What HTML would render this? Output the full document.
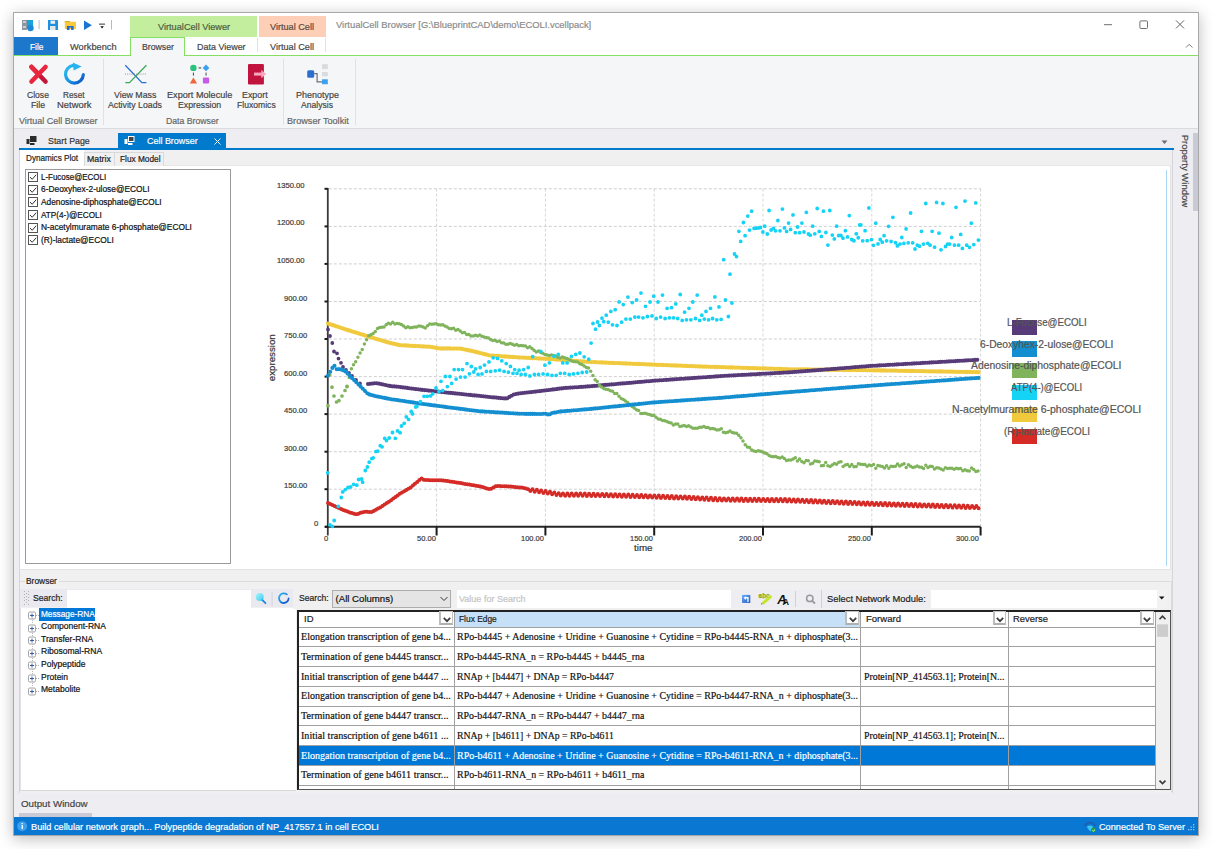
<!DOCTYPE html>
<html><head><meta charset="utf-8"><style>
html,body{margin:0;padding:0;width:1213px;height:849px;overflow:hidden;background:#fff;}
.a{position:absolute;}
.t{position:absolute;white-space:pre;line-height:1;transform-origin:0 50%;-webkit-text-stroke:0.2px currentColor;}
</style></head><body>
<div class="a" style="left:13px;top:12px;width:1186px;height:824px;background:#fff;border:1px solid #a8a8a8;box-sizing:border-box;box-shadow:0 3px 14px rgba(0,0,0,0.26);"></div>
<svg class="a" style="left:20px;top:18px" width="100" height="16" viewBox="0 0 100 16">
<rect x="2" y="2" width="5" height="10" fill="#8e96a0"/><rect x="3" y="3" width="3" height="2" fill="#c8ccd2"/><rect x="3" y="8" width="3" height="2" fill="#c8ccd2"/>
<rect x="7" y="2" width="6" height="9" fill="#1aa3d9"/><circle cx="10.5" cy="10" r="3.2" fill="#1e88d8"/>
<rect x="18.6" y="2" width="1" height="9" fill="#b9b9b9"/>
<path d="M28 2h9.5l0.5 0.5v9.5h-10z" fill="#1d90e0"/><rect x="30.5" y="2.6" width="4.6" height="3.2" fill="#e8eef3"/><rect x="30" y="8" width="5.5" height="4" fill="#e6e6e6"/>
<rect x="44.8" y="3" width="5.3" height="1.9" fill="#d9a020"/><rect x="44.8" y="3.8" width="11.1" height="7.2" fill="#fbc83c"/><path d="M46.9 11.9 V7.9 H53.6 V11.9 H51.1 V9.6 H49.5 V11.9z" fill="#1c6fd1"/>
<path d="M64 2.4 L71.9 7.15 L64 11.9z" fill="#1a74d4"/>
<rect x="79" y="5.5" width="6" height="1.3" fill="#666"/><path d="M80.3 8.2 H83.9 L82.1 10.6z" fill="#111"/>
<rect x="91" y="2" width="1" height="9.5" fill="#b9b9b9"/>
</svg>
<div class="a" style="left:130px;top:16px;width:127px;height:21px;background:#c2ee9d;"></div>
<div class="t" style="left:158.00px;top:23.10px;font-family:'Liberation Sans', sans-serif;font-size:9.2px;color:#4d5c43;">VirtualCell Viewer</div>
<div class="a" style="left:259px;top:16px;width:66.5px;height:21px;background:#fdcfb6;"></div>
<div class="t" style="left:270.20px;top:23.10px;font-family:'Liberation Sans', sans-serif;font-size:9.2px;color:#5c4a40;transform:scaleX(0.9928);">Virtual Cell</div>
<div class="t" style="left:336.00px;top:20.30px;font-family:'Liberation Sans', sans-serif;font-size:9.8px;color:#8c8c8c;transform:scaleX(0.9592);">VirtualCell Browser [G:\BlueprintCAD\demo\ECOLI.vcellpack]</div>
<svg class="a" style="left:1100px;top:16px" width="98" height="36" viewBox="0 0 98 36">
<rect x="4" y="8.2" width="8" height="1" fill="#6d6d6d"/>
<rect x="39.9" y="4.9" width="7.6" height="7.6" rx="1" fill="none" stroke="#707070" stroke-width="1"/>
<path d="M76 4.4l8 8M84 4.4l-8 8" stroke="#666" stroke-width="1"/>
<path d="M86 31.5l3.2-3.2 3.2 3.2" fill="none" stroke="#777" stroke-width="1"/>
</svg>
<div class="a" style="left:14px;top:37px;width:44.3px;height:18px;background:#1d78cb;"></div>
<div class="t" style="left:29.80px;top:41.70px;font-family:'Liberation Sans', sans-serif;font-size:9.8px;color:#fff;transform:scaleX(0.8485);">File</div>
<div class="t" style="left:70.00px;top:41.80px;font-family:'Liberation Sans', sans-serif;font-size:9.8px;color:#444;transform:scaleX(0.9435);">Workbench</div>
<div class="a" style="left:130px;top:37px;width:55px;height:19px;background:#f5f6f7;border:1px solid #84df62;border-bottom:none;box-sizing:border-box;"></div>
<div class="t" style="left:141.70px;top:42.10px;font-family:'Liberation Sans', sans-serif;font-size:9.8px;color:#444;transform:scaleX(0.8903);">Browser</div>
<div class="t" style="left:197.00px;top:42.10px;font-family:'Liberation Sans', sans-serif;font-size:9.8px;color:#444;transform:scaleX(0.9135);">Data Viewer</div>
<div class="a" style="left:257px;top:38px;width:1px;height:14px;background:#e2e2e2;"></div>
<div class="t" style="left:270.20px;top:41.90px;font-family:'Liberation Sans', sans-serif;font-size:9.8px;color:#444;transform:scaleX(0.9321);">Virtual Cell</div>
<div class="a" style="left:325px;top:38px;width:1px;height:14px;background:#e2e2e2;"></div>
<div class="a" style="left:14px;top:55px;width:116px;height:1px;background:#84df62;"></div>
<div class="a" style="left:185px;top:55px;width:1013px;height:1px;background:#84df62;"></div>
<div class="a" style="left:14px;top:56px;width:1184px;height:72px;background:#f5f6f7;"></div>
<div class="a" style="left:14px;top:128px;width:1184px;height:1px;background:#dadbdc;"></div>
<div class="a" style="left:103px;top:59px;width:1px;height:66px;background:#e0e1e3;"></div>
<div class="a" style="left:283px;top:59px;width:1px;height:66px;background:#e0e1e3;"></div>
<div class="a" style="left:355px;top:59px;width:1px;height:66px;background:#e0e1e3;"></div>
<svg class="a" style="left:14px;top:60px" width="330" height="28" viewBox="0 0 330 28">
<defs><linearGradient id="rg" x1="0" y1="0" x2="1" y2="1"><stop offset="0" stop-color="#2cc0f2"/><stop offset="0.5" stop-color="#1a9ae6"/><stop offset="1" stop-color="#0a4fc4"/></linearGradient></defs>
<path d="M17.5 7L31.5 21.5" stroke="#c3173a" stroke-width="4.6" stroke-linecap="round"/>
<path d="M17.5 7L24.5 14.2" stroke="#e8263e" stroke-width="4.6" stroke-linecap="round"/>
<path d="M31.5 7L17.5 21.5" stroke="#e8263e" stroke-width="4.6" stroke-linecap="round"/>
<path d="M69.3 14.6 A8.9 8.9 0 1 1 59.4 5.3" fill="none" stroke="url(#rg)" stroke-width="3.2" stroke-linecap="round"/>
<path d="M58.8 2.6 L67.6 6.6 L59.6 10.4 z" fill="#27b3ef"/>
<path d="M111.3 5.3 L127.9 22.6 H132.4" fill="none" stroke="#2a6fd6" stroke-width="1.3"/>
<path d="M132.4 5.3 L115.5 22.6 H111.3" fill="none" stroke="#3aa85a" stroke-width="1.3"/>
<path d="M111 14.1 H133" stroke="#8a8a8a" stroke-width="0.9" stroke-dasharray="1,1.2"/>
<circle cx="179.4" cy="7.9" r="3.2" fill="#2ac27c"/><path d="M192 4.6 L195.3 7.9 L192 11.2 L188.7 7.9 z" fill="#3a9ff0"/>
<rect x="184.6" y="7.3" width="2.6" height="1.2" fill="#555"/>
<rect x="178.9" y="12.6" width="1.1" height="3" fill="#555"/><rect x="191.5" y="12.6" width="1.1" height="3" fill="#555"/>
<path d="M179.4 17.4 L183.1 23.6 H175.8 z" fill="#f1653a"/><rect x="188.9" y="17.4" width="6.2" height="6.2" rx="1" fill="#c85ae9"/>
<rect x="234" y="3.9" width="15.9" height="20.5" rx="1.2" fill="#c0143f"/>
<rect x="240" y="12.6" width="7.8" height="3" fill="#f9a7c0"/><path d="M247.3 9.9 L252.2 14.1 L247.3 18.3 z" fill="#f9a7c0"/>
</svg>
<svg class="a" style="left:300px;top:60px" width="34" height="28" viewBox="0 0 34 28">
<rect x="7.2" y="10.2" width="7" height="7.6" rx="1.5" fill="#2b6fd0"/>
<path d="M14.2 13.7 H17.1 V21.9 H22" fill="none" stroke="#6b7078" stroke-width="1.2"/>
<rect x="22" y="4.2" width="5.8" height="4.9" fill="#d9dbdd"/><rect x="22" y="12" width="5.8" height="4.3" fill="#d9dbdd"/>
<rect x="22" y="19.3" width="5.8" height="4.9" fill="#3aa0ef"/>
</svg>
<div class="t" style="left:26.95px;top:90.20px;font-family:'Liberation Sans', sans-serif;font-size:9.8px;color:#444;transform:scaleX(0.8740);">Close</div>
<div class="t" style="left:30.85px;top:100.30px;font-family:'Liberation Sans', sans-serif;font-size:9.8px;color:#444;transform:scaleX(0.8929);">File</div>
<div class="t" style="left:63.45px;top:90.20px;font-family:'Liberation Sans', sans-serif;font-size:9.8px;color:#444;transform:scaleX(0.8398);">Reset</div>
<div class="t" style="left:56.95px;top:100.30px;font-family:'Liberation Sans', sans-serif;font-size:9.8px;color:#444;transform:scaleX(0.9599);">Network</div>
<div class="t" style="left:113.70px;top:90.20px;font-family:'Liberation Sans', sans-serif;font-size:9.8px;color:#444;transform:scaleX(0.8983);">View Mass</div>
<div class="t" style="left:108.15px;top:100.30px;font-family:'Liberation Sans', sans-serif;font-size:9.8px;color:#444;transform:scaleX(0.8915);">Activity Loads</div>
<div class="t" style="left:166.60px;top:90.20px;font-family:'Liberation Sans', sans-serif;font-size:9.8px;color:#444;transform:scaleX(0.9307);">Export Molecule</div>
<div class="t" style="left:177.80px;top:100.30px;font-family:'Liberation Sans', sans-serif;font-size:9.8px;color:#444;transform:scaleX(0.8911);">Expression</div>
<div class="t" style="left:242.40px;top:90.20px;font-family:'Liberation Sans', sans-serif;font-size:9.8px;color:#444;transform:scaleX(0.9038);">Export</div>
<div class="t" style="left:236.65px;top:100.30px;font-family:'Liberation Sans', sans-serif;font-size:9.8px;color:#444;transform:scaleX(0.8774);">Fluxomics</div>
<div class="t" style="left:295.55px;top:90.20px;font-family:'Liberation Sans', sans-serif;font-size:9.8px;color:#444;transform:scaleX(0.9154);">Phenotype</div>
<div class="t" style="left:301.00px;top:100.30px;font-family:'Liberation Sans', sans-serif;font-size:9.8px;color:#444;transform:scaleX(0.8769);">Analysis</div>
<div class="t" style="left:19.20px;top:115.70px;font-family:'Liberation Sans', sans-serif;font-size:9.8px;color:#666;transform:scaleX(0.9153);">Virtual Cell Browser</div>
<div class="t" style="left:165.80px;top:116.30px;font-family:'Liberation Sans', sans-serif;font-size:9.8px;color:#666;transform:scaleX(0.8877);">Data Browser</div>
<div class="t" style="left:287.00px;top:116.30px;font-family:'Liberation Sans', sans-serif;font-size:9.8px;color:#666;transform:scaleX(0.9326);">Browser Toolkit</div>
<div class="a" style="left:14px;top:129px;width:1184px;height:688px;background:#eeeef2;"></div>
<svg class="a" style="left:26px;top:136px" width="12" height="10" viewBox="0 0 12 10"><rect x="4" y="0" width="6.5" height="6" fill="#2b2b2b"/><rect x="0.5" y="3" width="3" height="5" fill="#2b2b2b"/><rect x="4" y="7" width="4.5" height="2" fill="#2b2b2b"/></svg>
<div class="t" style="left:48.10px;top:135.70px;font-family:'Liberation Sans', sans-serif;font-size:9.8px;color:#333;transform:scaleX(0.9027);">Start Page</div>
<div class="a" style="left:118px;top:133px;width:108px;height:15px;background:#007acc;"></div>
<svg class="a" style="left:124px;top:136px" width="12" height="10" viewBox="0 0 12 10"><rect x="4" y="0" width="6.5" height="6" fill="#fff"/><rect x="5" y="1" width="4.5" height="4" fill="#444"/><rect x="0.5" y="3" width="3" height="5" fill="#fff"/><rect x="4" y="7" width="4.5" height="2" fill="#fff"/></svg>
<div class="t" style="left:147.30px;top:135.70px;font-family:'Liberation Sans', sans-serif;font-size:9.8px;color:#fff;transform:scaleX(0.9127);">Cell Browser</div>
<svg class="a" style="left:213px;top:137px" width="9" height="9" viewBox="0 0 9 9"><path d="M1.5 1.5l6 6M7.5 1.5l-6 6" stroke="#fff" stroke-width="1"/></svg>
<div class="a" style="left:19px;top:148px;width:1155px;height:2px;background:#007acc;"></div>
<svg class="a" style="left:1161px;top:140px" width="8" height="5" viewBox="0 0 8 5"><path d="M0.5 0.5h6l-3 3.5z" fill="#6d6d6d"/></svg>
<div class="t" style="left:1148.05px;top:166.10px;font-family:'Liberation Sans', sans-serif;font-size:9.8px;color:#444;transform:rotate(90deg) scaleX(0.9716);transform-origin:50% 50%;">Property Window</div>
<div class="a" style="left:1193px;top:133px;width:5px;height:78px;background:#c9cad5;"></div>
<div class="a" style="left:19px;top:150px;width:1152px;height:16px;background:#f0f0f0;"></div>
<div class="a" style="left:19px;top:150px;width:65px;height:16px;background:#fff;"></div>
<div class="a" style="left:84px;top:151.5px;width:31.3px;height:14.5px;background:#f0f0f0;border:1px solid #d9d9d9;border-bottom:none;box-sizing:border-box;"></div>
<div class="a" style="left:115.3px;top:151.5px;width:48.4px;height:14.5px;background:#f0f0f0;border:1px solid #d9d9d9;border-bottom:none;border-left:none;box-sizing:border-box;"></div>
<div class="t" style="left:25.90px;top:153.50px;font-family:'Liberation Sans', sans-serif;font-size:8.8px;color:#222;transform:scaleX(0.9264);">Dynamics Plot</div>
<div class="t" style="left:87.20px;top:155.30px;font-family:'Liberation Sans', sans-serif;font-size:8.8px;color:#222;transform:scaleX(0.9935);">Matrix</div>
<div class="t" style="left:120.20px;top:155.30px;font-family:'Liberation Sans', sans-serif;font-size:8.8px;color:#222;transform:scaleX(0.9410);">Flux Model</div>
<div class="a" style="left:19px;top:166px;width:1152px;height:404px;background:#fff;"></div>
<div class="a" style="left:163.7px;top:165px;width:1007.3px;height:1px;background:#e6e6e6;"></div>
<div class="a" style="left:1166px;top:170px;width:1px;height:396px;background:#a9d8f5;"></div>
<div class="a" style="left:25px;top:169px;width:206.3px;height:395px;background:#fff;border:1px solid #9a9a9a;box-sizing:border-box;"></div>
<div class="a" style="left:28px;top:172.20000000000002px;width:10px;height:10px;background:#fff;border:1px solid #555;box-sizing:border-box;"></div>
<svg class="a" style="left:28px;top:172.2px" width="10" height="10" viewBox="0 0 10 10"><path d="M2 5l2.2 2.3 4-4.6" fill="none" stroke="#333" stroke-width="1"/></svg>
<div class="t" style="left:41.00px;top:172.80px;font-family:'Liberation Sans', sans-serif;font-size:8.4px;color:#111;transform:scaleX(0.9498);">L-Fucose@ECOLI</div>
<div class="a" style="left:28px;top:184.8px;width:10px;height:10px;background:#fff;border:1px solid #555;box-sizing:border-box;"></div>
<svg class="a" style="left:28px;top:184.8px" width="10" height="10" viewBox="0 0 10 10"><path d="M2 5l2.2 2.3 4-4.6" fill="none" stroke="#333" stroke-width="1"/></svg>
<div class="t" style="left:41.00px;top:185.40px;font-family:'Liberation Sans', sans-serif;font-size:8.4px;color:#111;">6-Deoxyhex-2-ulose@ECOLI</div>
<div class="a" style="left:28px;top:197.4px;width:10px;height:10px;background:#fff;border:1px solid #555;box-sizing:border-box;"></div>
<svg class="a" style="left:28px;top:197.4px" width="10" height="10" viewBox="0 0 10 10"><path d="M2 5l2.2 2.3 4-4.6" fill="none" stroke="#333" stroke-width="1"/></svg>
<div class="t" style="left:41.00px;top:198.00px;font-family:'Liberation Sans', sans-serif;font-size:8.4px;color:#111;transform:scaleX(0.9917);">Adenosine-diphosphate@ECOLI</div>
<div class="a" style="left:28px;top:210.00000000000003px;width:10px;height:10px;background:#fff;border:1px solid #555;box-sizing:border-box;"></div>
<svg class="a" style="left:28px;top:210.0px" width="10" height="10" viewBox="0 0 10 10"><path d="M2 5l2.2 2.3 4-4.6" fill="none" stroke="#333" stroke-width="1"/></svg>
<div class="t" style="left:41.00px;top:210.60px;font-family:'Liberation Sans', sans-serif;font-size:8.4px;color:#111;transform:scaleX(0.9758);">ATP(4-)@ECOLI</div>
<div class="a" style="left:28px;top:222.60000000000002px;width:10px;height:10px;background:#fff;border:1px solid #555;box-sizing:border-box;"></div>
<svg class="a" style="left:28px;top:222.6px" width="10" height="10" viewBox="0 0 10 10"><path d="M2 5l2.2 2.3 4-4.6" fill="none" stroke="#333" stroke-width="1"/></svg>
<div class="t" style="left:41.00px;top:223.20px;font-family:'Liberation Sans', sans-serif;font-size:8.4px;color:#111;">N-acetylmuramate 6-phosphate@ECOLI</div>
<div class="a" style="left:28px;top:235.20000000000002px;width:10px;height:10px;background:#fff;border:1px solid #555;box-sizing:border-box;"></div>
<svg class="a" style="left:28px;top:235.2px" width="10" height="10" viewBox="0 0 10 10"><path d="M2 5l2.2 2.3 4-4.6" fill="none" stroke="#333" stroke-width="1"/></svg>
<div class="t" style="left:41.00px;top:235.80px;font-family:'Liberation Sans', sans-serif;font-size:8.4px;color:#111;">(R)-lactate@ECOLI</div>
<svg class="a" style="left:0px;top:0px" width="1213" height="849" viewBox="0 0 1213 849"><line x1="328.8" y1="489.2" x2="980.5" y2="489.2" stroke="#cfcfcf" stroke-width="1" stroke-dasharray="3,2"/><line x1="328.8" y1="451.7" x2="980.5" y2="451.7" stroke="#cfcfcf" stroke-width="1" stroke-dasharray="3,2"/><line x1="328.8" y1="414.1" x2="980.5" y2="414.1" stroke="#cfcfcf" stroke-width="1" stroke-dasharray="3,2"/><line x1="328.8" y1="376.6" x2="980.5" y2="376.6" stroke="#cfcfcf" stroke-width="1" stroke-dasharray="3,2"/><line x1="328.8" y1="339.0" x2="980.5" y2="339.0" stroke="#cfcfcf" stroke-width="1" stroke-dasharray="3,2"/><line x1="328.8" y1="301.5" x2="980.5" y2="301.5" stroke="#cfcfcf" stroke-width="1" stroke-dasharray="3,2"/><line x1="328.8" y1="263.9" x2="980.5" y2="263.9" stroke="#cfcfcf" stroke-width="1" stroke-dasharray="3,2"/><line x1="328.8" y1="226.4" x2="980.5" y2="226.4" stroke="#cfcfcf" stroke-width="1" stroke-dasharray="3,2"/><line x1="328.8" y1="188.8" x2="980.5" y2="188.8" stroke="#cfcfcf" stroke-width="1" stroke-dasharray="3,2"/><line x1="436.6" y1="188.6" x2="436.6" y2="526.8" stroke="#d6d6d6" stroke-width="1" stroke-dasharray="3,2"/><line x1="545.4" y1="188.6" x2="545.4" y2="526.8" stroke="#d6d6d6" stroke-width="1" stroke-dasharray="3,2"/><line x1="654.2" y1="188.6" x2="654.2" y2="526.8" stroke="#d6d6d6" stroke-width="1" stroke-dasharray="3,2"/><line x1="763.0" y1="188.6" x2="763.0" y2="526.8" stroke="#d6d6d6" stroke-width="1" stroke-dasharray="3,2"/><line x1="871.8" y1="188.6" x2="871.8" y2="526.8" stroke="#d6d6d6" stroke-width="1" stroke-dasharray="3,2"/><line x1="980.6" y1="188.6" x2="980.6" y2="526.8" stroke="#d6d6d6" stroke-width="1" stroke-dasharray="3,2"/><line x1="327.8" y1="188" x2="327.8" y2="535.5" stroke="#3a3a3a" stroke-width="1.8"/><line x1="325" y1="526.8" x2="980.5" y2="526.8" stroke="#262626" stroke-width="2"/><line x1="324.5" y1="526.8" x2="327.8" y2="526.8" stroke="#1a1a1a" stroke-width="2"/><line x1="324.5" y1="489.2" x2="327.8" y2="489.2" stroke="#1a1a1a" stroke-width="2"/><line x1="324.5" y1="451.7" x2="327.8" y2="451.7" stroke="#1a1a1a" stroke-width="2"/><line x1="324.5" y1="414.1" x2="327.8" y2="414.1" stroke="#1a1a1a" stroke-width="2"/><line x1="324.5" y1="376.6" x2="327.8" y2="376.6" stroke="#1a1a1a" stroke-width="2"/><line x1="324.5" y1="339.0" x2="327.8" y2="339.0" stroke="#1a1a1a" stroke-width="2"/><line x1="324.5" y1="301.5" x2="327.8" y2="301.5" stroke="#1a1a1a" stroke-width="2"/><line x1="324.5" y1="263.9" x2="327.8" y2="263.9" stroke="#1a1a1a" stroke-width="2"/><line x1="324.5" y1="226.4" x2="327.8" y2="226.4" stroke="#1a1a1a" stroke-width="2"/><line x1="324.5" y1="188.8" x2="327.8" y2="188.8" stroke="#1a1a1a" stroke-width="2"/><line x1="436.6" y1="526.8" x2="436.6" y2="535.5" stroke="#1a1a1a" stroke-width="2"/><line x1="545.4" y1="526.8" x2="545.4" y2="535.5" stroke="#1a1a1a" stroke-width="2"/><line x1="654.2" y1="526.8" x2="654.2" y2="535.5" stroke="#1a1a1a" stroke-width="2"/><line x1="763.0" y1="526.8" x2="763.0" y2="535.5" stroke="#1a1a1a" stroke-width="2"/><line x1="871.8" y1="526.8" x2="871.8" y2="535.5" stroke="#1a1a1a" stroke-width="2"/><line x1="980.6" y1="526.8" x2="980.6" y2="535.5" stroke="#1a1a1a" stroke-width="2"/></svg>
<div class="t" style="left:314.20px;top:519.80px;font-family:'Liberation Sans', sans-serif;font-size:8px;color:#3a3a3a;transform:scaleX(0.9664);">0</div>
<div class="t" style="left:284.30px;top:482.25px;font-family:'Liberation Sans', sans-serif;font-size:8px;color:#3a3a3a;transform:scaleX(0.9522);">150.00</div>
<div class="t" style="left:284.30px;top:444.70px;font-family:'Liberation Sans', sans-serif;font-size:8px;color:#3a3a3a;transform:scaleX(0.9522);">300.00</div>
<div class="t" style="left:284.30px;top:407.15px;font-family:'Liberation Sans', sans-serif;font-size:8px;color:#3a3a3a;transform:scaleX(0.9522);">450.00</div>
<div class="t" style="left:284.30px;top:369.60px;font-family:'Liberation Sans', sans-serif;font-size:8px;color:#3a3a3a;transform:scaleX(0.9522);">600.00</div>
<div class="t" style="left:284.30px;top:332.05px;font-family:'Liberation Sans', sans-serif;font-size:8px;color:#3a3a3a;transform:scaleX(0.9522);">750.00</div>
<div class="t" style="left:284.30px;top:294.50px;font-family:'Liberation Sans', sans-serif;font-size:8px;color:#3a3a3a;transform:scaleX(0.9522);">900.00</div>
<div class="t" style="left:277.40px;top:256.95px;font-family:'Liberation Sans', sans-serif;font-size:8px;color:#3a3a3a;transform:scaleX(0.9544);">1050.00</div>
<div class="t" style="left:277.40px;top:219.40px;font-family:'Liberation Sans', sans-serif;font-size:8px;color:#3a3a3a;transform:scaleX(0.9544);">1200.00</div>
<div class="t" style="left:277.40px;top:181.85px;font-family:'Liberation Sans', sans-serif;font-size:8px;color:#3a3a3a;transform:scaleX(0.9544);">1350.00</div>
<div class="t" style="left:323.90px;top:534.90px;font-family:'Liberation Sans', sans-serif;font-size:8px;color:#3a3a3a;transform:scaleX(0.9440);">0</div>
<div class="t" style="left:416.50px;top:534.70px;font-family:'Liberation Sans', sans-serif;font-size:8px;color:#3a3a3a;transform:scaleX(0.9441);">50.00</div>
<div class="t" style="left:521.20px;top:534.70px;font-family:'Liberation Sans', sans-serif;font-size:8px;color:#3a3a3a;transform:scaleX(0.9318);">100.00</div>
<div class="t" style="left:630.00px;top:534.70px;font-family:'Liberation Sans', sans-serif;font-size:8px;color:#3a3a3a;transform:scaleX(0.9318);">150.00</div>
<div class="t" style="left:738.80px;top:534.70px;font-family:'Liberation Sans', sans-serif;font-size:8px;color:#3a3a3a;transform:scaleX(0.9318);">200.00</div>
<div class="t" style="left:847.60px;top:534.70px;font-family:'Liberation Sans', sans-serif;font-size:8px;color:#3a3a3a;transform:scaleX(0.9318);">250.00</div>
<div class="t" style="left:956.40px;top:534.70px;font-family:'Liberation Sans', sans-serif;font-size:8px;color:#3a3a3a;transform:scaleX(0.9318);">300.00</div>
<div class="t" style="left:634.35px;top:543.15px;font-family:'Liberation Sans', sans-serif;font-size:9.5px;color:#333;transform:scaleX(1.0308);">time</div>
<div class="t" style="left:248.90px;top:352.65px;font-family:'Liberation Sans', sans-serif;font-size:9.5px;color:#333;transform:rotate(-90deg) scaleX(1.0230);transform-origin:50% 50%;">expression</div>
<svg class="a" style="left:0px;top:0px" width="1213" height="849" viewBox="0 0 1213 849"><path d="M328.0 323.6h0M330.2 324.3h0M332.4 325.0h0M334.5 325.7h0M336.7 326.4h0M338.9 327.1h0M341.1 327.8h0M343.2 328.6h0M345.4 329.3h0M347.6 330.0h0M349.8 330.7h0M351.9 331.4h0M354.1 332.1h0M356.3 332.7h0M358.5 333.4h0M360.6 334.1h0M362.8 334.7h0M365.0 335.4h0M367.2 336.1h0M369.3 336.8h0M371.5 337.4h0M373.7 338.1h0M375.9 338.8h0M378.0 339.4h0M380.2 340.1h0M382.4 340.7h0M384.6 341.4h0M386.8 342.0h0M388.9 342.7h0M391.1 343.2h0M393.3 343.7h0M395.5 344.2h0M397.6 344.7h0M399.8 345.2h0M402.0 345.3h0M404.2 345.4h0M406.3 345.5h0M408.5 345.7h0M410.7 345.8h0M412.9 345.9h0M415.0 346.0h0M417.2 346.1h0M419.4 346.2h0M421.6 346.4h0M423.7 346.5h0M425.9 346.6h0M428.1 346.7h0M430.3 346.8h0M432.4 347.2h0M434.6 347.6h0M436.8 348.0h0M439.0 348.3h0M441.2 348.5h0M443.3 348.5h0M445.5 348.5h0M447.7 348.5h0M449.9 348.5h0M452.0 348.6h0M454.2 348.6h0M456.4 348.6h0M458.6 348.6h0M460.7 348.7h0M462.9 349.2h0M465.1 349.6h0M467.3 350.0h0M469.4 350.4h0M471.6 350.9h0M473.8 351.4h0M476.0 352.0h0M478.1 352.5h0M480.3 353.1h0M482.5 353.6h0M484.7 354.2h0M486.8 354.7h0M489.0 355.3h0M491.2 355.6h0M493.4 355.7h0M495.6 355.9h0M497.7 356.0h0M499.9 356.2h0M502.1 356.3h0M504.3 356.5h0M506.4 356.6h0M508.6 356.7h0M510.8 356.9h0M513.0 357.0h0M515.1 357.2h0M517.3 357.3h0M519.5 357.5h0M521.7 357.6h0M523.8 357.7h0M526.0 357.8h0M528.2 357.9h0M530.4 358.0h0M532.5 358.1h0M534.7 358.2h0M536.9 358.3h0M539.1 358.5h0M541.2 358.6h0M543.4 358.7h0M545.6 358.8h0M547.8 358.9h0M550.0 359.0h0M552.1 359.2h0M554.3 359.3h0M556.5 359.5h0M558.7 359.6h0M560.8 359.8h0M563.0 360.0h0M565.2 360.1h0M567.4 360.3h0M569.5 360.5h0M571.7 360.6h0M573.9 360.8h0M576.1 361.0h0M578.2 361.1h0M580.4 361.3h0M582.6 361.4h0M584.8 361.6h0M586.9 361.8h0M589.1 361.9h0M591.3 362.1h0M593.5 362.1h0M595.6 362.2h0M597.8 362.3h0M600.0 362.4h0M602.2 362.5h0M604.4 362.6h0M606.5 362.7h0M608.7 362.8h0M610.9 362.9h0M613.1 363.0h0M615.2 363.1h0M617.4 363.1h0M619.6 363.2h0M621.8 363.3h0M623.9 363.4h0M626.1 363.5h0M628.3 363.6h0M630.5 363.7h0M632.6 363.8h0M634.8 363.9h0M637.0 364.0h0M639.2 364.0h0M641.3 364.1h0M643.5 364.2h0M645.7 364.3h0M647.9 364.4h0M650.0 364.5h0M652.2 364.6h0M654.4 364.7h0M656.6 364.8h0M658.8 364.9h0M660.9 364.9h0M663.1 365.0h0M665.3 365.1h0M667.5 365.2h0M669.6 365.3h0M671.8 365.4h0M674.0 365.5h0M676.2 365.5h0M678.3 365.6h0M680.5 365.7h0M682.7 365.8h0M684.9 365.9h0M687.0 366.0h0M689.2 366.1h0M691.4 366.2h0M693.6 366.2h0M695.7 366.3h0M697.9 366.4h0M700.1 366.5h0M702.3 366.6h0M704.4 366.6h0M706.6 366.7h0M708.8 366.8h0M711.0 366.8h0M713.2 366.9h0M715.3 367.0h0M717.5 367.0h0M719.7 367.1h0M721.9 367.2h0M724.0 367.2h0M726.2 367.3h0M728.4 367.4h0M730.6 367.5h0M732.7 367.5h0M734.9 367.6h0M737.1 367.7h0M739.3 367.7h0M741.4 367.8h0M743.6 367.9h0M745.8 367.9h0M748.0 368.0h0M750.1 368.1h0M752.3 368.1h0M754.5 368.2h0M756.7 368.3h0M758.8 368.3h0M761.0 368.4h0M763.2 368.5h0M765.4 368.5h0M767.6 368.6h0M769.7 368.7h0M771.9 368.7h0M774.1 368.8h0M776.3 368.9h0M778.4 368.9h0M780.6 369.0h0M782.8 369.1h0M785.0 369.1h0M787.1 369.2h0M789.3 369.3h0M791.5 369.3h0M793.7 369.3h0M795.8 369.4h0M798.0 369.4h0M800.2 369.4h0M802.4 369.5h0M804.5 369.5h0M806.7 369.5h0M808.9 369.5h0M811.1 369.6h0M813.2 369.6h0M815.4 369.6h0M817.6 369.6h0M819.8 369.7h0M822.0 369.7h0M824.1 369.7h0M826.3 369.7h0M828.5 369.8h0M830.7 369.8h0M832.8 369.8h0M835.0 369.9h0M837.2 369.9h0M839.4 369.9h0M841.5 369.9h0M843.7 370.0h0M845.9 370.0h0M848.1 370.0h0M850.2 370.0h0M852.4 370.1h0M854.6 370.1h0M856.8 370.1h0M858.9 370.1h0M861.1 370.2h0M863.3 370.2h0M865.5 370.2h0M867.6 370.3h0M869.8 370.3h0M872.0 370.3h0M874.2 370.4h0M876.4 370.4h0M878.5 370.4h0M880.7 370.5h0M882.9 370.5h0M885.1 370.5h0M887.2 370.6h0M889.4 370.6h0M891.6 370.7h0M893.8 370.7h0M895.9 370.7h0M898.1 370.8h0M900.3 370.8h0M902.5 370.8h0M904.6 370.9h0M906.8 370.9h0M909.0 371.0h0M911.2 371.0h0M913.3 371.0h0M915.5 371.1h0M917.7 371.1h0M919.9 371.2h0M922.0 371.2h0M924.2 371.2h0M926.4 371.3h0M928.6 371.3h0M930.8 371.3h0M932.9 371.4h0M935.1 371.4h0M937.3 371.5h0M939.5 371.5h0M941.6 371.5h0M943.8 371.6h0M946.0 371.6h0M948.2 371.7h0M950.3 371.7h0M952.5 371.7h0M954.7 371.8h0M956.9 371.8h0M959.0 371.8h0M961.2 371.9h0M963.4 371.9h0M965.6 372.0h0M967.7 372.0h0M969.9 372.0h0M972.1 372.1h0M974.3 372.1h0M976.4 372.1h0M978.6 372.2h0" stroke="#f1c93d" stroke-width="4.3" stroke-linecap="round" fill="none"/><path d="M328.0 329.5h0M330.0 336.0h0M332.3 343.0h0M334.0 351.5h0M337.0 353.3h0M338.5 358.6h0M341.0 362.8h0M343.0 367.0h0M346.0 370.0h0M349.0 373.0h0M352.0 376.0h0M356.0 380.0h0M360.0 383.5h0" stroke="#573b78" stroke-width="3.8" stroke-linecap="round" fill="none"/><path d="M368.0 384.0h0M370.2 383.7h0M372.4 383.5h0M374.5 383.2h0M376.7 383.2h0M378.9 383.6h0M381.1 384.1h0M383.2 384.5h0M385.4 385.0h0M387.6 385.5h0M389.8 385.9h0M391.9 386.2h0M394.1 386.4h0M396.3 386.6h0M398.5 386.8h0M400.6 387.1h0M402.8 387.4h0M405.0 387.6h0M407.2 387.9h0M409.3 388.2h0M411.5 388.5h0M413.7 388.8h0M415.9 389.1h0M418.0 389.3h0M420.2 389.6h0M422.4 389.9h0M424.6 390.1h0M426.8 390.3h0M428.9 390.6h0M431.1 390.8h0M433.3 391.1h0M435.5 391.3h0M437.6 391.5h0M439.8 391.8h0M442.0 392.0h0M444.2 392.2h0M446.3 392.5h0M448.5 392.7h0M450.7 392.9h0M452.9 393.1h0M455.0 393.4h0M457.2 393.6h0M459.4 393.8h0M461.6 394.0h0M463.7 394.3h0M465.9 394.5h0M468.1 394.7h0M470.3 394.9h0M472.4 395.2h0M474.6 395.4h0M476.8 395.6h0M479.0 395.8h0M481.2 396.1h0M483.3 396.3h0M485.5 396.5h0M487.7 396.7h0M489.9 397.0h0M492.0 397.2h0M494.2 397.4h0M496.4 397.6h0M498.6 397.9h0M500.7 398.1h0M502.9 398.2h0M505.1 398.4h0M507.3 398.2h0M509.4 396.9h0M511.6 395.7h0M513.8 394.5h0M516.0 394.0h0M518.1 393.6h0M520.3 393.3h0M522.5 393.0h0M524.7 392.8h0M526.8 392.5h0M529.0 392.3h0M531.2 392.1h0M533.4 391.8h0M535.6 391.6h0M537.7 391.3h0M539.9 391.1h0M542.1 390.8h0M544.3 390.5h0M546.4 390.3h0M548.6 390.0h0M550.8 389.7h0M553.0 389.4h0M555.1 389.2h0M557.3 388.9h0M559.5 388.6h0M561.7 388.4h0M563.8 388.1h0M566.0 387.9h0M568.2 387.8h0M570.4 387.6h0M572.5 387.5h0M574.7 387.3h0M576.9 387.2h0M579.1 387.0h0M581.2 386.9h0M583.4 386.7h0M585.6 386.6h0M587.8 386.4h0M590.0 386.3h0M592.1 386.1h0M594.3 385.9h0M596.5 385.7h0M598.7 385.5h0M600.8 385.3h0M603.0 385.1h0M605.2 384.9h0M607.4 384.8h0M609.5 384.6h0M611.7 384.4h0M613.9 384.2h0M616.1 384.0h0M618.2 383.8h0M620.4 383.6h0M622.6 383.4h0M624.8 383.2h0M626.9 383.1h0M629.1 382.9h0M631.3 382.7h0M633.5 382.5h0M635.6 382.3h0M637.8 382.1h0M640.0 381.9h0M642.2 381.7h0M644.4 381.5h0M646.5 381.3h0M648.7 381.2h0M650.9 381.0h0M653.1 380.8h0M655.2 380.6h0M657.4 380.5h0M659.6 380.3h0M661.8 380.2h0M663.9 380.0h0M666.1 379.9h0M668.3 379.7h0M670.5 379.6h0M672.6 379.4h0M674.8 379.3h0M677.0 379.1h0M679.2 379.0h0M681.3 378.8h0M683.5 378.7h0M685.7 378.5h0M687.9 378.4h0M690.0 378.2h0M692.2 378.1h0M694.4 377.9h0M696.6 377.8h0M698.8 377.6h0M700.9 377.5h0M703.1 377.3h0M705.3 377.2h0M707.5 377.0h0M709.6 376.9h0M711.8 376.7h0M714.0 376.6h0M716.2 376.4h0M718.3 376.3h0M720.5 376.1h0M722.7 376.0h0M724.9 375.8h0M727.0 375.7h0M729.2 375.6h0M731.4 375.5h0M733.6 375.4h0M735.7 375.3h0M737.9 375.1h0M740.1 375.0h0M742.3 374.9h0M744.4 374.8h0M746.6 374.7h0M748.8 374.5h0M751.0 374.4h0M753.2 374.3h0M755.3 374.2h0M757.5 374.1h0M759.7 373.9h0M761.9 373.8h0M764.0 373.7h0M766.2 373.6h0M768.4 373.5h0M770.6 373.4h0M772.7 373.2h0M774.9 373.1h0M777.1 373.0h0M779.3 372.9h0M781.4 372.8h0M783.6 372.6h0M785.8 372.5h0M788.0 372.4h0M790.1 372.3h0M792.3 372.1h0M794.5 371.9h0M796.7 371.8h0M798.8 371.6h0M801.0 371.4h0M803.2 371.3h0M805.4 371.1h0M807.6 370.9h0M809.7 370.7h0M811.9 370.6h0M814.1 370.4h0M816.3 370.2h0M818.4 370.1h0M820.6 369.9h0M822.8 369.7h0M825.0 369.5h0M827.1 369.4h0M829.3 369.2h0M831.5 369.0h0M833.7 368.9h0M835.8 368.7h0M838.0 368.5h0M840.2 368.3h0M842.4 368.2h0M844.5 368.0h0M846.7 367.8h0M848.9 367.7h0M851.1 367.5h0M853.2 367.3h0M855.4 367.1h0M857.6 367.0h0M859.8 366.8h0M862.0 366.6h0M864.1 366.5h0M866.3 366.3h0M868.5 366.1h0M870.7 365.9h0M872.8 365.8h0M875.0 365.7h0M877.2 365.6h0M879.4 365.4h0M881.5 365.3h0M883.7 365.2h0M885.9 365.1h0M888.1 364.9h0M890.2 364.8h0M892.4 364.7h0M894.6 364.6h0M896.8 364.4h0M898.9 364.3h0M901.1 364.2h0M903.3 364.1h0M905.5 363.9h0M907.6 363.8h0M909.8 363.7h0M912.0 363.6h0M914.2 363.4h0M916.4 363.3h0M918.5 363.2h0M920.7 363.1h0M922.9 362.9h0M925.1 362.8h0M927.2 362.7h0M929.4 362.6h0M931.6 362.4h0M933.8 362.3h0M935.9 362.2h0M938.1 362.1h0M940.3 361.9h0M942.5 361.8h0M944.6 361.7h0M946.8 361.6h0M949.0 361.4h0M951.2 361.3h0M953.3 361.2h0M955.5 361.1h0M957.7 360.9h0M959.9 360.8h0M962.0 360.7h0M964.2 360.6h0M966.4 360.4h0M968.6 360.3h0M970.8 360.2h0M972.9 360.1h0M975.1 359.9h0M977.3 359.8h0" stroke="#573b78" stroke-width="4.1" stroke-linecap="round" fill="none"/><path d="M328.0 405.7h0M332.0 387.2h0M334.0 396.0h0M336.5 402.0h0M339.0 400.6h0M342.0 396.0h0M345.0 390.5h0M347.0 386.7h0M329.8 374.8h0" stroke="#80b45c" stroke-width="3.7" stroke-linecap="round" fill="none"/><path d="M347.0 386.3h0M349.2 377.4h0M351.4 368.7h0M353.5 364.7h0M355.7 361.7h0M357.9 357.3h0M360.1 353.0h0M362.2 349.6h0M364.4 344.1h0M366.6 339.7h0M368.8 335.8h0M370.9 334.7h0M373.1 333.5h0M375.3 331.5h0M377.5 328.5h0M379.6 327.6h0M381.8 327.3h0M384.0 326.9h0M386.2 324.8h0M388.3 323.3h0M390.5 324.1h0M392.7 322.2h0M394.9 324.1h0M397.0 323.4h0M399.2 323.8h0M401.4 324.6h0M403.6 326.0h0M405.8 327.7h0M407.9 326.7h0M410.1 327.7h0M412.3 327.6h0M414.5 326.9h0M416.6 327.1h0M418.8 326.0h0M421.0 326.2h0M423.2 327.0h0M425.3 328.1h0M427.5 325.8h0M429.7 323.9h0M431.9 324.2h0M434.0 324.0h0M436.2 323.8h0M438.4 324.8h0M440.6 324.9h0M442.7 324.7h0M444.9 326.1h0M447.1 326.9h0M449.3 328.5h0M451.4 328.7h0M453.6 328.3h0M455.8 330.3h0M458.0 329.4h0M460.2 330.9h0M462.3 332.7h0M464.5 332.6h0M466.7 334.4h0M468.9 334.5h0M471.0 336.1h0M473.2 335.9h0M475.4 335.2h0M477.6 335.9h0M479.7 334.9h0M481.9 336.3h0M484.1 336.9h0M486.3 337.6h0M488.4 338.1h0M490.6 339.6h0M492.8 340.5h0M495.0 340.3h0M497.1 341.4h0M499.3 340.9h0M501.5 342.7h0M503.7 343.0h0M505.8 344.2h0M508.0 344.2h0M510.2 343.6h0M512.4 344.2h0M514.6 345.2h0M516.7 344.4h0M518.9 345.7h0M521.1 345.5h0M523.3 345.7h0M525.4 345.9h0M527.6 347.7h0M529.8 346.7h0M532.0 348.6h0M534.1 350.2h0M536.3 351.9h0M538.5 351.1h0M540.7 352.6h0M542.8 353.3h0M545.0 354.5h0M547.2 354.9h0M549.4 355.6h0M551.5 354.9h0M553.7 355.6h0M555.9 355.9h0M558.1 357.4h0M560.2 358.0h0M562.4 357.0h0M564.6 357.7h0M566.8 358.5h0M569.0 359.2h0M571.1 360.4h0M573.3 361.5h0M575.5 361.7h0M577.7 362.1h0M579.8 363.8h0M582.0 364.6h0M584.2 365.9h0M586.4 367.6h0M588.5 368.0h0M590.7 371.3h0M592.9 375.4h0M595.1 379.8h0M597.2 381.4h0M599.4 385.3h0M601.6 387.1h0M603.8 388.4h0M605.9 389.3h0M608.1 389.6h0M610.3 390.7h0M612.5 391.2h0M614.6 393.4h0M616.8 393.6h0M619.0 396.3h0M621.2 398.5h0M623.4 399.6h0M625.5 401.0h0M627.7 402.4h0M629.9 404.4h0M632.1 406.6h0M634.2 407.9h0M636.4 409.8h0M638.6 410.4h0M640.8 413.5h0M642.9 413.5h0M645.1 413.2h0M647.3 413.9h0M649.5 414.6h0M651.6 415.2h0M653.8 415.2h0M656.0 417.2h0M658.2 418.9h0M660.3 419.2h0M662.5 420.6h0M664.7 420.8h0M666.9 421.5h0M669.0 422.6h0M671.2 423.1h0M673.4 424.9h0M675.6 424.0h0M677.8 424.1h0M679.9 426.4h0M682.1 426.0h0M684.3 425.5h0M686.5 426.6h0M688.6 425.8h0M690.8 427.1h0M693.0 428.3h0M695.2 428.3h0M697.3 428.3h0M699.5 427.2h0M701.7 427.2h0M703.9 426.6h0M706.0 427.6h0M708.2 427.5h0M710.4 428.7h0M712.6 428.5h0M714.7 428.9h0M716.9 429.9h0M719.1 429.7h0M721.3 428.8h0M723.4 432.3h0M725.6 432.8h0M727.8 432.2h0M730.0 431.0h0M732.2 432.5h0M734.3 433.1h0M736.5 433.3h0M738.7 435.2h0M740.9 437.8h0M743.0 441.1h0M745.2 444.7h0M747.4 446.9h0M749.6 447.5h0M751.7 450.1h0M753.9 450.9h0M756.1 451.4h0M758.3 450.8h0M760.4 451.2h0M762.6 452.1h0M764.8 452.9h0M767.0 453.8h0M769.1 455.5h0M771.3 456.5h0M773.5 456.8h0M775.7 456.6h0M777.8 457.4h0M780.0 458.1h0M782.2 457.1h0M784.4 458.5h0M786.6 460.4h0M788.7 460.0h0M790.9 460.1h0M793.1 459.0h0M795.3 457.8h0M797.4 460.9h0M799.6 458.9h0M801.8 461.5h0M804.0 462.7h0M806.1 460.4h0M808.3 460.8h0M810.5 463.9h0M812.7 463.3h0M814.8 461.0h0M817.0 461.2h0M819.2 461.8h0M821.4 465.8h0M823.5 465.6h0M825.7 462.4h0M827.9 465.7h0M830.1 466.4h0M832.2 464.9h0M834.4 463.4h0M836.6 464.3h0M838.8 462.3h0M841.0 461.8h0M843.1 466.4h0M845.3 464.9h0M847.5 464.5h0M849.7 466.6h0M851.8 464.4h0M854.0 466.7h0M856.2 466.6h0M858.4 463.8h0M860.5 464.2h0M862.7 464.6h0M864.9 464.5h0M867.1 466.3h0M869.2 464.9h0M871.4 465.8h0M873.6 464.4h0M875.8 468.2h0M877.9 465.5h0M880.1 466.0h0M882.3 466.6h0M884.5 468.1h0M886.6 465.8h0M888.8 468.2h0M891.0 466.2h0M893.2 466.4h0M895.4 466.3h0M897.5 463.9h0M899.7 465.9h0M901.9 464.7h0M904.1 463.8h0M906.2 467.6h0M908.4 464.7h0M910.6 466.2h0M912.8 467.6h0M914.9 466.9h0M917.1 465.9h0M919.3 466.9h0M921.5 467.2h0M923.6 468.4h0M925.8 465.3h0M928.0 467.6h0M930.2 466.2h0M932.3 466.4h0M934.5 468.9h0M936.7 467.7h0M938.9 468.0h0M941.0 469.1h0M943.2 469.9h0M945.4 467.7h0M947.6 468.6h0M949.8 468.2h0M951.9 468.3h0M954.1 469.3h0M956.3 468.2h0M958.5 468.7h0M960.6 468.5h0M962.8 470.8h0M965.0 469.8h0M967.2 470.7h0M969.3 471.1h0M971.5 467.9h0M973.7 469.5h0M975.9 471.4h0M978.0 471.0h0" stroke="#80b45c" stroke-width="3.5" stroke-linecap="round" fill="none"/><path d="M328.0 375.6h0M330.2 371.7h0M332.4 367.9h0M334.5 365.8h0M336.7 369.2h0M338.9 369.1h0M341.1 369.4h0M343.2 370.3h0M345.4 371.4h0M347.6 373.6h0M349.8 375.8h0M351.9 377.9h0M354.1 380.1h0M356.3 382.3h0M358.5 384.5h0M360.6 386.6h0M362.8 388.8h0M365.0 391.0h0M367.2 393.2h0M369.3 394.4h0M371.5 395.0h0M373.7 395.6h0M375.9 396.2h0M378.0 396.6h0M380.2 397.0h0M382.4 397.5h0M384.6 397.9h0M386.8 398.4h0M388.9 398.8h0M391.1 399.2h0M393.3 399.5h0M395.5 399.8h0M397.6 400.1h0M399.8 400.5h0M402.0 400.8h0M404.2 401.1h0M406.3 401.5h0M408.5 401.8h0M410.7 402.1h0M412.9 402.4h0M415.0 402.8h0M417.2 403.1h0M419.4 403.4h0M421.6 403.7h0M423.7 404.0h0M425.9 404.3h0M428.1 404.6h0M430.3 404.9h0M432.4 405.2h0M434.6 405.4h0M436.8 405.7h0M439.0 406.0h0M441.2 406.3h0M443.3 406.6h0M445.5 406.9h0M447.7 407.2h0M449.9 407.5h0M452.0 407.8h0M454.2 408.0h0M456.4 408.3h0M458.6 408.6h0M460.7 408.9h0M462.9 409.1h0M465.1 409.4h0M467.3 409.7h0M469.4 410.0h0M471.6 410.2h0M473.8 410.5h0M476.0 410.8h0M478.1 411.1h0M480.3 411.3h0M482.5 411.4h0M484.7 411.6h0M486.8 411.7h0M489.0 411.8h0M491.2 412.0h0M493.4 412.1h0M495.6 412.2h0M497.7 412.4h0M499.9 412.5h0M502.1 412.6h0M504.3 412.8h0M506.4 412.9h0M508.6 413.1h0M510.8 413.2h0M513.0 413.3h0M515.1 413.5h0M517.3 413.6h0M519.5 413.8h0M521.7 413.8h0M523.8 413.8h0M526.0 413.9h0M528.2 413.9h0M530.4 413.9h0M532.5 413.9h0M534.7 413.9h0M536.9 414.0h0M539.1 414.0h0M541.2 414.0h0M543.4 413.8h0M545.6 413.8h0M547.8 414.4h0M550.0 414.2h0M552.1 413.0h0M554.3 412.6h0M556.5 412.2h0M558.7 411.8h0M560.8 411.4h0M563.0 411.2h0M565.2 411.1h0M567.4 410.9h0M569.5 410.7h0M571.7 410.5h0M573.9 410.3h0M576.1 410.2h0M578.2 410.0h0M580.4 409.8h0M582.6 409.6h0M584.8 409.4h0M586.9 409.3h0M589.1 409.1h0M591.3 408.9h0M593.5 408.6h0M595.6 408.4h0M597.8 408.2h0M600.0 408.0h0M602.2 407.7h0M604.4 407.5h0M606.5 407.3h0M608.7 407.1h0M610.9 406.8h0M613.1 406.6h0M615.2 406.4h0M617.4 406.2h0M619.6 405.9h0M621.8 405.7h0M623.9 405.5h0M626.1 405.3h0M628.3 405.1h0M630.5 404.8h0M632.6 404.6h0M634.8 404.4h0M637.0 404.2h0M639.2 403.9h0M641.3 403.7h0M643.5 403.5h0M645.7 403.3h0M647.9 403.0h0M650.0 402.8h0M652.2 402.6h0M654.4 402.4h0M656.6 402.2h0M658.8 402.1h0M660.9 401.9h0M663.1 401.8h0M665.3 401.6h0M667.5 401.5h0M669.6 401.3h0M671.8 401.2h0M674.0 401.0h0M676.2 400.9h0M678.3 400.7h0M680.5 400.6h0M682.7 400.4h0M684.9 400.3h0M687.0 400.1h0M689.2 400.0h0M691.4 399.8h0M693.6 399.7h0M695.7 399.5h0M697.9 399.4h0M700.1 399.2h0M702.3 399.1h0M704.4 398.9h0M706.6 398.8h0M708.8 398.6h0M711.0 398.5h0M713.2 398.3h0M715.3 398.2h0M717.5 398.0h0M719.7 397.9h0M721.9 397.7h0M724.0 397.5h0M726.2 397.3h0M728.4 397.2h0M730.6 397.0h0M732.7 396.8h0M734.9 396.6h0M737.1 396.4h0M739.3 396.3h0M741.4 396.1h0M743.6 395.9h0M745.8 395.7h0M748.0 395.5h0M750.1 395.3h0M752.3 395.2h0M754.5 395.0h0M756.7 394.8h0M758.8 394.6h0M761.0 394.4h0M763.2 394.2h0M765.4 394.1h0M767.6 393.9h0M769.7 393.7h0M771.9 393.5h0M774.1 393.3h0M776.3 393.2h0M778.4 393.0h0M780.6 392.8h0M782.8 392.6h0M785.0 392.4h0M787.1 392.2h0M789.3 392.1h0M791.5 391.9h0M793.7 391.7h0M795.8 391.5h0M798.0 391.4h0M800.2 391.2h0M802.4 391.0h0M804.5 390.9h0M806.7 390.7h0M808.9 390.5h0M811.1 390.3h0M813.2 390.2h0M815.4 390.0h0M817.6 389.8h0M819.8 389.7h0M822.0 389.5h0M824.1 389.3h0M826.3 389.1h0M828.5 389.0h0M830.7 388.8h0M832.8 388.6h0M835.0 388.5h0M837.2 388.3h0M839.4 388.1h0M841.5 387.9h0M843.7 387.8h0M845.9 387.6h0M848.1 387.4h0M850.2 387.3h0M852.4 387.1h0M854.6 386.9h0M856.8 386.7h0M858.9 386.6h0M861.1 386.4h0M863.3 386.2h0M865.5 386.1h0M867.6 385.9h0M869.8 385.7h0M872.0 385.5h0M874.2 385.4h0M876.4 385.2h0M878.5 385.1h0M880.7 384.9h0M882.9 384.8h0M885.1 384.6h0M887.2 384.4h0M889.4 384.3h0M891.6 384.1h0M893.8 384.0h0M895.9 383.8h0M898.1 383.7h0M900.3 383.5h0M902.5 383.3h0M904.6 383.2h0M906.8 383.0h0M909.0 382.9h0M911.2 382.7h0M913.3 382.6h0M915.5 382.4h0M917.7 382.2h0M919.9 382.1h0M922.0 381.9h0M924.2 381.8h0M926.4 381.6h0M928.6 381.5h0M930.8 381.3h0M932.9 381.2h0M935.1 381.0h0M937.3 380.8h0M939.5 380.7h0M941.6 380.5h0M943.8 380.4h0M946.0 380.2h0M948.2 380.1h0M950.3 379.9h0M952.5 379.7h0M954.7 379.6h0M956.9 379.4h0M959.0 379.3h0M961.2 379.1h0M963.4 379.0h0M965.6 378.8h0M967.7 378.6h0M969.9 378.5h0M972.1 378.3h0M974.3 378.2h0M976.4 378.0h0M978.6 377.9h0" stroke="#138fd1" stroke-width="4.1" stroke-linecap="round" fill="none"/><path d="M328.0 503.0h0M330.2 504.0h0M332.4 505.0h0M334.5 506.0h0M336.7 507.1h0M338.9 508.1h0M341.1 509.0h0M343.2 509.9h0M345.4 510.8h0M347.6 511.6h0M349.8 512.5h0M351.9 513.1h0M354.1 513.7h0M356.3 514.3h0M358.5 513.8h0M360.6 512.8h0M362.8 512.3h0M365.0 511.8h0M367.2 511.7h0M369.3 512.0h0M371.5 512.0h0M373.7 510.9h0M375.9 509.7h0M378.0 508.5h0M380.2 507.4h0M382.4 505.9h0M384.6 504.5h0M386.8 503.1h0M388.9 501.7h0M391.1 500.2h0M393.3 498.6h0M395.5 497.0h0M397.6 495.4h0M399.8 493.7h0M402.0 492.5h0M404.2 491.3h0M406.3 490.1h0M408.5 488.8h0M410.7 487.4h0M412.9 485.6h0M415.0 483.7h0M417.2 481.9h0M419.4 480.0h0M421.6 478.4h0M423.7 479.8h0M425.9 480.0h0M428.1 480.1h0M430.3 480.2h0M432.4 480.2h0M434.6 480.2h0M436.8 480.2h0M439.0 480.3h0M441.2 480.3h0M443.3 480.4h0M445.5 480.7h0M447.7 481.1h0M449.9 481.5h0M452.0 481.8h0M454.2 482.1h0M456.4 482.5h0M458.6 482.8h0M460.7 483.1h0M462.9 483.5h0M465.1 483.9h0M467.3 484.2h0M469.4 484.6h0M471.6 485.0h0M473.8 485.3h0M476.0 485.7h0M478.1 486.1h0M480.3 486.5h0M482.5 487.1h0M484.7 487.8h0M486.8 488.5h0M489.0 489.1h0M491.2 488.7h0M493.4 487.5h0M495.6 486.3h0M497.7 486.0h0M499.9 486.1h0M502.1 486.2h0M504.3 486.2h0M506.4 486.3h0M508.6 486.4h0M510.8 486.5h0M513.0 486.7h0M515.1 486.9h0M517.3 487.2h0M519.5 487.4h0M521.7 487.6h0M523.8 487.9h0M526.0 488.4h0M528.2 489.3h0M530.4 491.1h0M532.5 489.2h0M534.7 491.7h0M536.9 489.8h0M539.1 492.3h0M541.2 490.4h0M543.4 492.9h0M545.6 491.0h0M547.8 493.6h0M550.0 491.7h0M552.1 494.3h0M554.3 492.5h0M556.5 495.0h0M558.7 493.2h0M560.8 495.6h0M563.0 493.4h0M565.2 495.7h0M567.4 493.5h0M569.5 495.7h0M571.7 493.5h0M573.9 495.7h0M576.1 493.6h0M578.2 495.8h0M580.4 493.6h0M582.6 495.8h0M584.8 493.6h0M586.9 495.9h0M589.1 493.7h0M591.3 495.9h0M593.5 493.8h0M595.6 496.0h0M597.8 493.9h0M600.0 496.1h0M602.2 494.0h0M604.4 496.2h0M606.5 494.1h0M608.7 496.3h0M610.9 494.2h0M613.1 496.5h0M615.2 494.3h0M617.4 496.6h0M619.6 494.4h0M621.8 496.7h0M623.9 494.5h0M626.1 496.8h0M628.3 494.6h0M630.5 496.9h0M632.6 494.8h0M634.8 497.0h0M637.0 494.9h0M639.2 497.2h0M641.3 495.1h0M643.5 497.3h0M645.7 495.2h0M647.9 497.5h0M650.0 495.4h0M652.2 497.6h0M654.4 495.5h0M656.6 497.8h0M658.8 495.6h0M660.9 497.9h0M663.1 495.8h0M665.3 498.1h0M667.5 495.9h0M669.6 498.2h0M671.8 496.1h0M674.0 498.4h0M676.2 496.2h0M678.3 498.5h0M680.5 496.4h0M682.7 498.6h0M684.9 496.5h0M687.0 498.8h0M689.2 496.7h0M691.4 499.1h0M693.6 497.0h0M695.7 499.3h0M697.9 497.2h0M700.1 499.5h0M702.3 497.4h0M704.4 499.7h0M706.6 497.6h0M708.8 499.9h0M711.0 497.8h0M713.2 500.2h0M715.3 498.1h0M717.5 500.4h0M719.7 498.3h0M721.9 500.6h0M724.0 498.4h0M726.2 500.6h0M728.4 498.5h0M730.6 500.7h0M732.7 498.5h0M734.9 500.8h0M737.1 498.6h0M739.3 500.8h0M741.4 498.6h0M743.6 500.9h0M745.8 498.7h0M748.0 500.9h0M750.1 498.7h0M752.3 501.0h0M754.5 498.8h0M756.7 501.0h0M758.8 498.8h0M761.0 501.1h0M763.2 498.9h0M765.4 501.1h0M767.6 498.9h0M769.7 501.2h0M771.9 499.0h0M774.1 501.2h0M776.3 499.0h0M778.4 501.3h0M780.6 499.1h0M782.8 501.3h0M785.0 499.1h0M787.1 501.4h0M789.3 499.2h0M791.5 501.5h0M793.7 499.4h0M795.8 501.7h0M798.0 499.5h0M800.2 501.8h0M802.4 499.7h0M804.5 502.0h0M806.7 499.9h0M808.9 502.2h0M811.1 500.1h0M813.2 502.4h0M815.4 500.3h0M817.6 502.6h0M819.8 500.5h0M822.0 502.8h0M824.1 500.7h0M826.3 503.0h0M828.5 500.9h0M830.7 503.2h0M832.8 501.0h0M835.0 503.3h0M837.2 501.2h0M839.4 503.5h0M841.5 501.4h0M843.7 503.7h0M845.9 501.6h0M848.1 503.9h0M850.2 501.8h0M852.4 504.1h0M854.6 502.0h0M856.8 504.3h0M858.9 502.2h0M861.1 504.5h0M863.3 502.4h0M865.5 504.7h0M867.6 502.5h0M869.8 504.8h0M872.0 502.7h0M874.2 505.0h0M876.4 502.9h0M878.5 505.1h0M880.7 503.0h0M882.9 505.3h0M885.1 503.1h0M887.2 505.4h0M889.4 503.3h0M891.6 505.5h0M893.8 503.4h0M895.9 505.7h0M898.1 503.5h0M900.3 505.8h0M902.5 503.7h0M904.6 506.0h0M906.8 503.8h0M909.0 506.1h0M911.2 504.0h0M913.3 506.2h0M915.5 504.1h0M917.7 506.4h0M919.9 504.2h0M922.0 506.5h0M924.2 504.4h0M926.4 506.6h0M928.6 504.5h0M930.8 506.8h0M932.9 504.6h0M935.1 506.9h0M937.3 504.8h0M939.5 507.0h0M941.6 504.9h0M943.8 507.2h0M946.0 505.0h0M948.2 507.3h0M950.3 505.2h0M952.5 507.5h0M954.7 505.3h0M956.9 507.6h0M959.0 505.5h0M961.2 507.7h0M963.4 505.6h0M965.6 507.9h0M967.7 505.7h0M969.9 508.0h0M972.1 505.9h0M974.3 508.1h0M976.4 506.0h0M978.6 508.3h0" stroke="#d42b27" stroke-width="4.0" stroke-linecap="round" fill="none"/><path d="M327.7 472.8h0M330.0 524.9h0M332.4 526.3h0M334.2 520.5h0M338.3 506.4h0M341.3 497.5h0M342.7 491.9h0M345.3 489.6h0M348.0 487.5h0M350.6 486.9h0M353.6 484.3h0M356.8 485.2h0M358.6 479.5h0M361.6 479.0h0M362.6 482.2h0M365.3 470.5h0M367.4 467.0h0M369.2 462.2h0M371.8 458.6h0M373.2 457.8h0M375.9 451.6h0M377.7 451.2h0M380.3 445.7h0M382.1 446.8h0M384.7 438.3h0M386.5 440.6h0M389.2 438.0h0M392.5 432.5h0M395.3 438.3h0M397.5 430.9h0M400.1 432.7h0M401.5 426.0h0M404.2 423.3h0M406.3 416.8h0M408.6 419.4h0M411.2 411.5h0M412.5 413.9h0M415.7 407.0h0M416.9 406.5h0M420.4 401.7h0M424.0 396.3h0M427.2 396.3h0M430.5 395.9h0M432.8 393.8h0M436.0 388.0h0M439.0 391.5h0M441.0 381.3h0M442.7 390.6h0M445.3 376.5h0M447.4 386.6h0M449.9 376.5h0M451.7 383.4h0M454.2 369.6h0M456.1 379.1h0M458.5 369.6h0M460.5 377.1h0M462.5 369.6h0M465.1 377.1h0M467.0 363.6h0M469.4 373.8h0M471.3 366.5h0M473.8 372.0h0M475.6 368.8h0M478.1 374.5h0M480.2 367.5h0M482.0 373.9h0M484.5 365.1h0M486.4 371.4h0M489.0 361.9h0M490.7 371.4h0M493.2 357.8h0M495.3 370.8h0M497.5 358.4h0M499.6 370.2h0M501.8 360.8h0M504.1 371.4h0M506.2 363.6h0M508.4 372.2h0M510.5 366.4h0M513.0 373.3h0M514.7 369.6h0M517.0 373.3h0M519.1 370.2h0M521.1 374.5h0M523.7 369.6h0M525.3 374.5h0M528.2 367.5h0M529.9 376.0h0M532.7 356.6h0M534.4 374.5h0M538.6 374.5h0M540.8 351.3h0M543.1 373.9h0M544.9 365.2h0M547.6 374.5h0M549.4 362.8h0M552.0 375.3h0M554.0 356.3h0M556.2 375.3h0M558.3 354.4h0M560.3 373.3h0M562.8 362.9h0M564.7 373.3h0M567.1 362.9h0M569.2 374.5h0M571.5 356.3h0M573.5 373.9h0M575.8 354.4h0M577.9 373.3h0M579.9 353.0h0M582.2 372.5h0M584.2 356.8h0M586.7 372.0h0M588.7 359.2h0M591.1 343.1h0M593.0 323.5h0M595.5 329.2h0M597.6 322.0h0M599.4 325.5h0M602.0 318.2h0M603.7 321.7h0M606.2 315.2h0M608.3 322.2h0M610.8 311.4h0M612.5 324.8h0M615.2 309.7h0M617.0 325.5h0M619.1 301.9h0M621.6 322.2h0M623.3 304.6h0M625.9 319.1h0M627.9 297.1h0M630.3 319.1h0M632.2 302.6h0M634.8 317.1h0M636.6 300.0h0M638.6 317.1h0M641.0 293.1h0M643.0 317.8h0M645.5 306.3h0M647.4 316.5h0M650.0 302.0h0M652.0 315.9h0M653.8 296.2h0M656.2 318.5h0M658.0 302.0h0M660.6 317.1h0M662.5 295.1h0M665.1 318.5h0M667.1 308.3h0M669.4 317.8h0M671.5 307.7h0M673.5 317.8h0M675.8 303.9h0M677.7 318.5h0M680.2 294.5h0M682.2 320.4h0M684.6 312.2h0M686.5 319.8h0M689.0 308.3h0M690.9 319.8h0M692.8 302.0h0M695.5 318.5h0M697.2 295.1h0M699.7 320.4h0M701.8 315.2h0M704.3 319.1h0M706.0 311.4h0M708.6 319.8h0M710.5 308.3h0M712.6 318.5h0M714.9 296.9h0M716.8 319.8h0M719.0 306.9h0M721.1 319.4h0M725.4 300.0h0M728.4 316.5h0M731.9 303.0h0M723.7 259.7h0M730.0 274.2h0M734.5 254.0h0M736.5 256.6h0M740.7 241.4h0M738.9 231.3h0M743.4 222.5h0M745.1 235.7h0M747.8 216.1h0M749.5 230.1h0M751.6 211.2h0M754.1 228.4h0M756.5 228.2h0M758.7 227.9h0M760.5 227.5h0M762.9 232.0h0M764.7 226.2h0M767.3 234.0h0M769.1 210.5h0M771.1 230.0h0M773.4 228.4h0M775.6 230.8h0M777.9 220.5h0M780.0 230.8h0M782.4 209.1h0M784.4 227.9h0M786.6 231.4h0M788.6 223.1h0M790.6 229.4h0M793.0 214.9h0M795.3 232.7h0M797.5 227.0h0M799.6 232.7h0M801.9 223.1h0M804.0 232.0h0M806.3 212.3h0M808.4 234.0h0M810.2 235.2h0M812.7 226.2h0M814.8 233.8h0M817.2 208.5h0M819.2 231.4h0M821.4 236.4h0M823.4 211.2h0M825.9 232.5h0M827.9 245.1h0M829.8 210.5h0M832.3 235.1h0M834.3 238.9h0M836.7 226.2h0M838.7 235.5h0M840.9 235.5h0M843.0 238.2h0M845.4 230.7h0M847.6 236.9h0M849.3 215.6h0M851.7 239.5h0M853.8 240.7h0M856.2 233.8h0M858.3 237.6h0M859.7 225.0h0M852.2 239.6h0M854.0 240.8h0M856.4 233.8h0M858.2 237.8h0M860.9 224.9h0M862.7 240.8h0M865.1 230.7h0M867.2 240.7h0M868.9 208.0h0M871.5 239.6h0M873.4 245.3h0M875.8 223.2h0M878.0 243.9h0M880.2 239.5h0M882.3 242.2h0M884.1 235.7h0M886.6 240.8h0M888.6 226.3h0M891.1 241.5h0M892.9 217.3h0M895.5 242.7h0M897.4 245.9h0M900.0 244.1h0M901.8 237.5h0M903.9 243.4h0M906.1 228.9h0M908.2 242.8h0M910.6 213.0h0M912.7 242.8h0M915.0 249.0h0M917.3 245.2h0M919.5 246.2h0M921.4 231.3h0M923.5 244.1h0M925.8 203.5h0M927.8 243.3h0M930.1 245.2h0M932.1 231.3h0M934.6 247.2h0M936.6 202.4h0M939.0 233.2h0M941.0 249.8h0M942.9 203.5h0M945.5 246.5h0M947.6 244.1h0M949.7 244.1h0M951.7 237.5h0M954.5 245.2h0M956.0 207.3h0M958.7 245.2h0M960.7 234.4h0M962.4 248.4h0M965.0 201.1h0M966.7 245.2h0M969.5 247.3h0M971.3 223.2h0M973.8 244.6h0M975.8 202.9h0M978.4 240.1h0" stroke="#14d3f5" stroke-width="3.8" stroke-linecap="round" fill="none"/></svg>
<div class="a" style="left:1011.7px;top:319.5px;width:25.2px;height:15.3px;background:#573b78;"></div>
<div class="a" style="left:1011.7px;top:341.3px;width:25.2px;height:15.3px;background:#138fd1;"></div>
<div class="a" style="left:1011.7px;top:363.1px;width:25.2px;height:15.3px;background:#80b45c;"></div>
<div class="a" style="left:1011.7px;top:384.9px;width:25.2px;height:15.3px;background:#14d3f5;"></div>
<div class="a" style="left:1011.7px;top:406.7px;width:25.2px;height:15.3px;background:#f1c93d;"></div>
<div class="a" style="left:1011.7px;top:428.5px;width:25.2px;height:15.3px;background:#d42b27;"></div>
<div class="t" style="left:1006.85px;top:317.80px;font-family:'Liberation Sans', sans-serif;font-size:10px;color:#555;transform:scaleX(0.9738);">L-Fucose@ECOLI</div>
<div class="t" style="left:980.05px;top:339.60px;font-family:'Liberation Sans', sans-serif;font-size:10px;color:#555;transform:scaleX(1.0281);">6-Deoxyhex-2-ulose@ECOLI</div>
<div class="t" style="left:971.45px;top:361.40px;font-family:'Liberation Sans', sans-serif;font-size:10px;color:#555;transform:scaleX(1.0362);">Adenosine-diphosphate@ECOLI</div>
<div class="t" style="left:1011.10px;top:383.20px;font-family:'Liberation Sans', sans-serif;font-size:10px;color:#555;transform:scaleX(0.9567);">ATP(4-)@ECOLI</div>
<div class="t" style="left:952.10px;top:405.00px;font-family:'Liberation Sans', sans-serif;font-size:10px;color:#555;transform:scaleX(1.0497);">N-acetylmuramate 6-phosphate@ECOLI</div>
<div class="t" style="left:1003.75px;top:426.80px;font-family:'Liberation Sans', sans-serif;font-size:10px;color:#555;transform:scaleX(0.9892);">(R)-lactate@ECOLI</div>
<div class="a" style="left:19px;top:570px;width:1152px;height:11px;background:#f0f0f0;"></div>
<div class="a" style="left:19px;top:581px;width:1153px;height:212px;background:#f0f0f0;"></div>
<div class="a" style="left:20px;top:581px;width:5px;height:1px;background:#dcdcdc;"></div>
<div class="a" style="left:58.5px;top:581px;width:1113px;height:1px;background:#dcdcdc;"></div>
<div class="a" style="left:1171px;top:581px;width:1px;height:211px;background:#dcdcdc;"></div>
<div class="t" style="left:26.00px;top:575.70px;font-family:'Liberation Sans', sans-serif;font-size:9.4px;color:#222;transform:scaleX(0.8992);">Browser</div>
<div class="a" style="left:20px;top:588.7px;width:274px;height:18.8px;background:#e9e9ef;"></div>
<div class="a" style="left:24.2px;top:591.0px;width:1px;height:1px;background:#b0b0b0;"></div>
<div class="a" style="left:27.8px;top:591.0px;width:1px;height:1px;background:#b0b0b0;"></div>
<div class="a" style="left:26px;top:592.6px;width:1px;height:1px;background:#b0b0b0;"></div>
<div class="a" style="left:24.2px;top:594.15px;width:1px;height:1px;background:#b0b0b0;"></div>
<div class="a" style="left:27.8px;top:594.15px;width:1px;height:1px;background:#b0b0b0;"></div>
<div class="a" style="left:26px;top:595.75px;width:1px;height:1px;background:#b0b0b0;"></div>
<div class="a" style="left:24.2px;top:597.3px;width:1px;height:1px;background:#b0b0b0;"></div>
<div class="a" style="left:27.8px;top:597.3px;width:1px;height:1px;background:#b0b0b0;"></div>
<div class="a" style="left:26px;top:598.9px;width:1px;height:1px;background:#b0b0b0;"></div>
<div class="a" style="left:24.2px;top:600.45px;width:1px;height:1px;background:#b0b0b0;"></div>
<div class="a" style="left:27.8px;top:600.45px;width:1px;height:1px;background:#b0b0b0;"></div>
<div class="a" style="left:26px;top:602.0500000000001px;width:1px;height:1px;background:#b0b0b0;"></div>
<div class="a" style="left:24.2px;top:603.6px;width:1px;height:1px;background:#b0b0b0;"></div>
<div class="a" style="left:27.8px;top:603.6px;width:1px;height:1px;background:#b0b0b0;"></div>
<div class="t" style="left:33.30px;top:592.60px;font-family:'Liberation Sans', sans-serif;font-size:9.6px;color:#222;transform:scaleX(0.8977);">Search:</div>
<div class="a" style="left:67px;top:589.5px;width:184px;height:18px;background:#fff;"></div>
<svg class="a" style="left:255px;top:592px" width="36" height="14" viewBox="0 0 36 14">
<defs><linearGradient id="lg1" x1="0" y1="0" x2="1" y2="1"><stop offset="0" stop-color="#a6f7fc"/><stop offset="1" stop-color="#3cc8ef"/></linearGradient>
<linearGradient id="lg2" x1="0" y1="0" x2="1" y2="1"><stop offset="0" stop-color="#35b8f0"/><stop offset="1" stop-color="#0b4fc8"/></linearGradient></defs>
<circle cx="4.7" cy="5.1" r="4" fill="url(#lg1)"/><path d="M7.4 8.1 L10.5 11.2" stroke="#1a8ad8" stroke-width="1.8" stroke-linecap="round"/>
<rect x="16.6" y="-2" width="1" height="17" fill="#d3d4de"/>
<path d="M31.8 2.4 A4.8 4.8 0 1 0 33.6 6.5" fill="none" stroke="url(#lg2)" stroke-width="1.8" stroke-linecap="round"/>
</svg>
<div class="a" style="left:20px;top:608px;width:276px;height:183px;background:#fff;border-left:1px solid #e2e2e6;border-bottom:1px solid #d8d8dc;box-sizing:border-box;"></div>
<div class="a" style="left:39.2px;top:608.4px;width:56.3px;height:12.3px;background:#0078d7;"></div>
<svg class="a" style="left:27px;top:610.9px" width="14" height="9" viewBox="0 0 14 9"><rect x="1.5" y="1" width="7" height="7" rx="1.3" fill="#fff" stroke="#a3a3a3"/><path d="M3 4.5h4M5 2.5v4" stroke="#3c5aa8" stroke-width="1"/><path d="M9 4.5h4" stroke="#aaa" stroke-width="1" stroke-dasharray="1,1"/></svg>
<div class="a" style="left:32px;top:618.3px;width:1px;height:5px;border-left:1px dotted #bbb;"></div>
<div class="t" style="left:40.70px;top:609.55px;font-family:'Liberation Sans', sans-serif;font-size:8.9px;color:#fff;transform:scaleX(0.9297);">Message-RNA</div>
<svg class="a" style="left:27px;top:623.5px" width="14" height="9" viewBox="0 0 14 9"><rect x="1.5" y="1" width="7" height="7" rx="1.3" fill="#fff" stroke="#a3a3a3"/><path d="M3 4.5h4M5 2.5v4" stroke="#3c5aa8" stroke-width="1"/><path d="M9 4.5h4" stroke="#aaa" stroke-width="1" stroke-dasharray="1,1"/></svg>
<div class="a" style="left:32px;top:630.93px;width:1px;height:5px;border-left:1px dotted #bbb;"></div>
<div class="t" style="left:40.70px;top:622.18px;font-family:'Liberation Sans', sans-serif;font-size:8.9px;color:#111;transform:scaleX(0.9600);">Component-RNA</div>
<svg class="a" style="left:27px;top:636.2px" width="14" height="9" viewBox="0 0 14 9"><rect x="1.5" y="1" width="7" height="7" rx="1.3" fill="#fff" stroke="#a3a3a3"/><path d="M3 4.5h4M5 2.5v4" stroke="#3c5aa8" stroke-width="1"/><path d="M9 4.5h4" stroke="#aaa" stroke-width="1" stroke-dasharray="1,1"/></svg>
<div class="a" style="left:32px;top:643.56px;width:1px;height:5px;border-left:1px dotted #bbb;"></div>
<div class="t" style="left:40.70px;top:634.81px;font-family:'Liberation Sans', sans-serif;font-size:8.9px;color:#111;transform:scaleX(0.9600);">Transfer-RNA</div>
<svg class="a" style="left:27px;top:648.8px" width="14" height="9" viewBox="0 0 14 9"><rect x="1.5" y="1" width="7" height="7" rx="1.3" fill="#fff" stroke="#a3a3a3"/><path d="M3 4.5h4M5 2.5v4" stroke="#3c5aa8" stroke-width="1"/><path d="M9 4.5h4" stroke="#aaa" stroke-width="1" stroke-dasharray="1,1"/></svg>
<div class="a" style="left:32px;top:656.1899999999999px;width:1px;height:5px;border-left:1px dotted #bbb;"></div>
<div class="t" style="left:40.70px;top:647.44px;font-family:'Liberation Sans', sans-serif;font-size:8.9px;color:#111;transform:scaleX(0.9600);">Ribosomal-RNA</div>
<svg class="a" style="left:27px;top:661.4px" width="14" height="9" viewBox="0 0 14 9"><rect x="1.5" y="1" width="7" height="7" rx="1.3" fill="#fff" stroke="#a3a3a3"/><path d="M3 4.5h4M5 2.5v4" stroke="#3c5aa8" stroke-width="1"/><path d="M9 4.5h4" stroke="#aaa" stroke-width="1" stroke-dasharray="1,1"/></svg>
<div class="a" style="left:32px;top:668.8199999999999px;width:1px;height:5px;border-left:1px dotted #bbb;"></div>
<div class="t" style="left:40.70px;top:660.07px;font-family:'Liberation Sans', sans-serif;font-size:8.9px;color:#111;transform:scaleX(0.9600);">Polypeptide</div>
<svg class="a" style="left:27px;top:674.0px" width="14" height="9" viewBox="0 0 14 9"><rect x="1.5" y="1" width="7" height="7" rx="1.3" fill="#fff" stroke="#a3a3a3"/><path d="M3 4.5h4M5 2.5v4" stroke="#3c5aa8" stroke-width="1"/><path d="M9 4.5h4" stroke="#aaa" stroke-width="1" stroke-dasharray="1,1"/></svg>
<div class="a" style="left:32px;top:681.4499999999999px;width:1px;height:5px;border-left:1px dotted #bbb;"></div>
<div class="t" style="left:40.70px;top:672.70px;font-family:'Liberation Sans', sans-serif;font-size:8.9px;color:#111;transform:scaleX(0.9600);">Protein</div>
<svg class="a" style="left:27px;top:686.7px" width="14" height="9" viewBox="0 0 14 9"><rect x="1.5" y="1" width="7" height="7" rx="1.3" fill="#fff" stroke="#a3a3a3"/><path d="M3 4.5h4M5 2.5v4" stroke="#3c5aa8" stroke-width="1"/><path d="M9 4.5h4" stroke="#aaa" stroke-width="1" stroke-dasharray="1,1"/></svg>
<div class="t" style="left:40.70px;top:685.33px;font-family:'Liberation Sans', sans-serif;font-size:8.9px;color:#111;transform:scaleX(0.9600);">Metabolite</div>
<div class="a" style="left:293px;top:589px;width:878px;height:20px;background:#f0f0f0;"></div>
<div class="t" style="left:299.30px;top:593.20px;font-family:'Liberation Sans', sans-serif;font-size:9.6px;color:#222;transform:scaleX(0.8977);">Search:</div>
<div class="a" style="left:332.3px;top:590px;width:118.5px;height:17.7px;background:#e5e5e5;border:1px solid #adadad;box-sizing:border-box;"></div>
<div class="t" style="left:335.60px;top:594.20px;font-family:'Liberation Sans', sans-serif;font-size:9.6px;color:#111;">(All Columns)</div>
<svg class="a" style="left:440px;top:596px" width="8" height="6" viewBox="0 0 8 6"><path d="M0.5 1l3.5 3.5 3.5-3.5" fill="none" stroke="#333" stroke-width="1"/></svg>
<div class="a" style="left:456.7px;top:590px;width:274.5px;height:18px;background:#fff;"></div>
<div class="t" style="left:459.00px;top:593.90px;font-family:'Liberation Sans', sans-serif;font-size:9.8px;color:#c4c4c4;transform:scaleX(0.9201);">Value for Search</div>
<div class="a" style="left:731px;top:590px;width:198.5px;height:18.6px;background:#eeeef2;"></div>
<svg class="a" style="left:740px;top:591px" width="80" height="16" viewBox="0 0 80 16">
<defs><linearGradient id="bg1" x1="0" y1="0" x2="1" y2="1"><stop offset="0" stop-color="#6fb0f5"/><stop offset="1" stop-color="#1a56c8"/></linearGradient></defs>
<rect x="2" y="3.9" width="8.3" height="8" fill="url(#bg1)"/><path d="M3.6 6.9 L5.8 4.9 V6.1 H8.6 V10.9 H7.3 V7.6 H5.8 V8.9 z" fill="#fff"/>
<text x="18.6" y="6.6" font-family="Liberation Sans" font-size="6.4" font-weight="bold" fill="#b3d418" stroke="#6e7a10" stroke-width="0.25">abc</text>
<path d="M31.4 4.8 L22.6 12.6" stroke="#c5e52d" stroke-width="3"/><path d="M22.6 12.6 l-1.6 1.6 l0.6 -2.2z" fill="#555"/>
<text x="37.2" y="12.8" font-family="Liberation Sans" font-size="13" font-style="italic" font-weight="bold" fill="#111">A</text><text x="42.6" y="13.9" font-family="Liberation Sans" font-size="9" font-weight="bold" fill="#111">A</text>
<rect x="55" y="0" width="1" height="17" fill="#cfd0da"/>
<circle cx="69.8" cy="7.4" r="3.2" fill="none" stroke="#9a9a9a" stroke-width="1.5"/><path d="M72.2 9.9l2.8 2.6" stroke="#9a9a9a" stroke-width="1.9"/>
</svg>
<div class="a" style="left:821.4px;top:590px;width:1px;height:18px;background:#cfd0da;"></div>
<div class="t" style="left:827.00px;top:593.90px;font-family:'Liberation Sans', sans-serif;font-size:9.8px;color:#222;transform:scaleX(0.9556);">Select Network Module:</div>
<div class="a" style="left:930.5px;top:590.3px;width:236px;height:17.7px;background:#fff;"></div>
<div class="a" style="left:1157px;top:590.3px;width:10px;height:17.7px;background:#f2f2f2;"></div>
<svg class="a" style="left:1159px;top:596px" width="6" height="4" viewBox="0 0 6 4"><path d="M0 0.5h5.5l-2.75 3z" fill="#111"/></svg>
<div class="a" style="left:297px;top:610px;width:873.5px;height:180px;background:#fff;border:2px solid #222;border-right:1px solid #555;border-bottom:1px solid #555;box-sizing:border-box;"></div>
<div class="a" style="left:454.8px;top:612px;width:405px;height:14.5px;background:#c6e0f7;"></div>
<div class="t" style="left:303.50px;top:614.90px;font-family:'Liberation Sans', sans-serif;font-size:9.2px;color:#222;transform:scaleX(1.0326);">ID</div>
<div class="t" style="left:459.00px;top:614.90px;font-family:'Liberation Sans', sans-serif;font-size:9.2px;color:#222;transform:scaleX(0.9125);">Flux Edge</div>
<div class="t" style="left:866.00px;top:614.90px;font-family:'Liberation Sans', sans-serif;font-size:9.2px;color:#222;transform:scaleX(1.0373);">Forward</div>
<div class="t" style="left:1013.00px;top:614.90px;font-family:'Liberation Sans', sans-serif;font-size:9.2px;color:#222;transform:scaleX(1.0216);">Reverse</div>
<div class="a" style="left:439.1px;top:611.2px;width:13.8px;height:14.3px;background:#fff;border:1px solid #c2c2c2;border-left:2px solid #bdbdbd;border-bottom:2px solid #b0b0b0;box-sizing:border-box;"></div>
<svg class="a" style="left:442.6px;top:617px" width="8" height="6" viewBox="0 0 8 6"><path d="M0.8 0.8l3.2 3.4 3.2-3.4" fill="none" stroke="#3a3a3a" stroke-width="1.7"/></svg>
<div class="a" style="left:845.0px;top:611.2px;width:13.8px;height:14.3px;background:#fff;border:1px solid #c2c2c2;border-left:2px solid #bdbdbd;border-bottom:2px solid #b0b0b0;box-sizing:border-box;"></div>
<svg class="a" style="left:848.5px;top:617px" width="8" height="6" viewBox="0 0 8 6"><path d="M0.8 0.8l3.2 3.4 3.2-3.4" fill="none" stroke="#3a3a3a" stroke-width="1.7"/></svg>
<div class="a" style="left:992.5px;top:611.2px;width:13.8px;height:14.3px;background:#fff;border:1px solid #c2c2c2;border-left:2px solid #bdbdbd;border-bottom:2px solid #b0b0b0;box-sizing:border-box;"></div>
<svg class="a" style="left:996.0px;top:617px" width="8" height="6" viewBox="0 0 8 6"><path d="M0.8 0.8l3.2 3.4 3.2-3.4" fill="none" stroke="#3a3a3a" stroke-width="1.7"/></svg>
<div class="a" style="left:1139.8px;top:611.2px;width:13.8px;height:14.3px;background:#fff;border:1px solid #c2c2c2;border-left:2px solid #bdbdbd;border-bottom:2px solid #b0b0b0;box-sizing:border-box;"></div>
<svg class="a" style="left:1143.3px;top:617px" width="8" height="6" viewBox="0 0 8 6"><path d="M0.8 0.8l3.2 3.4 3.2-3.4" fill="none" stroke="#3a3a3a" stroke-width="1.7"/></svg>
<div class="a" style="left:1155px;top:612px;width:14.5px;height:177px;background:#f0f0f0;"></div>
<div class="a" style="left:299px;top:626.5px;width:856px;height:1px;background:#a0a0a0;"></div>
<div class="a" style="left:299px;top:646.25px;width:856px;height:1px;background:#a0a0a0;"></div>
<div class="a" style="left:299px;top:666.0px;width:856px;height:1px;background:#a0a0a0;"></div>
<div class="a" style="left:299px;top:685.75px;width:856px;height:1px;background:#a0a0a0;"></div>
<div class="a" style="left:299px;top:705.5px;width:856px;height:1px;background:#a0a0a0;"></div>
<div class="a" style="left:299px;top:725.25px;width:856px;height:1px;background:#a0a0a0;"></div>
<div class="a" style="left:299px;top:745.0px;width:856px;height:1px;background:#a0a0a0;"></div>
<div class="a" style="left:299px;top:764.75px;width:856px;height:1px;background:#a0a0a0;"></div>
<div class="a" style="left:299px;top:784.5px;width:856px;height:1px;background:#a0a0a0;"></div>
<div class="a" style="left:299px;top:745.5px;width:856px;height:19.75px;background:#0078d7;"></div>
<div class="a" style="left:454.3px;top:612px;width:1px;height:177px;background:#a0a0a0;"></div>
<div class="a" style="left:860.2px;top:612px;width:1px;height:177px;background:#a0a0a0;"></div>
<div class="a" style="left:1007.7px;top:612px;width:1px;height:177px;background:#a0a0a0;"></div>
<div class="a" style="left:1155px;top:612px;width:1px;height:177px;background:#a0a0a0;"></div>
<div class="t" style="left:301.20px;top:632.00px;font-family:'Liberation Serif', serif;font-size:10.4px;color:#111;transform:scaleX(0.9671);">Elongation transcription of gene b4...</div>
<div class="t" style="left:457.30px;top:632.00px;font-family:'Liberation Serif', serif;font-size:10.4px;color:#111;transform:scaleX(0.9564);">RPo-b4445 + Adenosine + Uridine + Guanosine + Cytidine = RPo-b4445-RNA_n + diphosphate(3...</div>
<div class="t" style="left:301.20px;top:651.75px;font-family:'Liberation Serif', serif;font-size:10.4px;color:#111;transform:scaleX(0.9782);">Termination of gene b4445 transcr...</div>
<div class="t" style="left:457.30px;top:651.75px;font-family:'Liberation Serif', serif;font-size:10.4px;color:#111;transform:scaleX(0.9508);">RPo-b4445-RNA_n = RPo-b4445 + b4445_rna</div>
<div class="t" style="left:301.20px;top:671.50px;font-family:'Liberation Serif', serif;font-size:10.4px;color:#111;transform:scaleX(0.9679);">Initial transcription of gene b4447 ...</div>
<div class="t" style="left:457.30px;top:671.50px;font-family:'Liberation Serif', serif;font-size:10.4px;color:#111;transform:scaleX(0.9323);">RNAp + [b4447] + DNAp = RPo-b4447</div>
<div class="t" style="left:864.10px;top:671.50px;font-family:'Liberation Serif', serif;font-size:10.4px;color:#111;transform:scaleX(0.9444);">Protein[NP_414563.1]; Protein[N...</div>
<div class="t" style="left:301.20px;top:691.25px;font-family:'Liberation Serif', serif;font-size:10.4px;color:#111;transform:scaleX(0.9671);">Elongation transcription of gene b4...</div>
<div class="t" style="left:457.30px;top:691.25px;font-family:'Liberation Serif', serif;font-size:10.4px;color:#111;transform:scaleX(0.9564);">RPo-b4447 + Adenosine + Uridine + Guanosine + Cytidine = RPo-b4447-RNA_n + diphosphate(3...</div>
<div class="t" style="left:301.20px;top:711.00px;font-family:'Liberation Serif', serif;font-size:10.4px;color:#111;transform:scaleX(0.9782);">Termination of gene b4447 transcr...</div>
<div class="t" style="left:457.30px;top:711.00px;font-family:'Liberation Serif', serif;font-size:10.4px;color:#111;transform:scaleX(0.9508);">RPo-b4447-RNA_n = RPo-b4447 + b4447_rna</div>
<div class="t" style="left:301.20px;top:730.75px;font-family:'Liberation Serif', serif;font-size:10.4px;color:#111;transform:scaleX(0.9704);">Initial transcription of gene b4611 ...</div>
<div class="t" style="left:457.30px;top:730.75px;font-family:'Liberation Serif', serif;font-size:10.4px;color:#111;transform:scaleX(0.9366);">RNAp + [b4611] + DNAp = RPo-b4611</div>
<div class="t" style="left:864.10px;top:730.75px;font-family:'Liberation Serif', serif;font-size:10.4px;color:#111;transform:scaleX(0.9444);">Protein[NP_414563.1]; Protein[N...</div>
<div class="t" style="left:301.20px;top:750.50px;font-family:'Liberation Serif', serif;font-size:10.4px;color:#fff;transform:scaleX(0.9671);">Elongation transcription of gene b4...</div>
<div class="t" style="left:457.30px;top:750.50px;font-family:'Liberation Serif', serif;font-size:10.4px;color:#fff;transform:scaleX(0.9582);">RPo-b4611 + Adenosine + Uridine + Guanosine + Cytidine = RPo-b4611-RNA_n + diphosphate(3...</div>
<div class="t" style="left:301.20px;top:770.25px;font-family:'Liberation Serif', serif;font-size:10.4px;color:#111;transform:scaleX(0.9807);">Termination of gene b4611 transcr...</div>
<div class="t" style="left:457.30px;top:770.25px;font-family:'Liberation Serif', serif;font-size:10.4px;color:#111;transform:scaleX(0.9564);">RPo-b4611-RNA_n = RPo-b4611 + b4611_rna</div>
<svg class="a" style="left:1156px;top:612px" width="13" height="177" viewBox="0 0 13 177"><path d="M3.5 7.2l3-3 3 3" fill="none" stroke="#3a3a3a" stroke-width="1.6"/><rect x="1.1" y="12.3" width="10.9" height="12.5" fill="#cdcdcd"/><path d="M3.5 168.6l3 3 3-3" fill="none" stroke="#3a3a3a" stroke-width="1.6"/></svg>
<div class="a" style="left:19px;top:150px;width:1px;height:643px;background:#d6d6da;"></div>
<div class="a" style="left:1170px;top:166px;width:1px;height:404px;background:#e3e3e3;"></div>
<div class="a" style="left:19px;top:569px;width:1152px;height:1px;background:#e3e3e3;"></div>
<div class="a" style="left:1172px;top:150px;width:1px;height:643px;background:#d6d6da;"></div>
<div class="t" style="left:20.60px;top:799.20px;font-family:'Liberation Sans', sans-serif;font-size:9.8px;color:#444;transform:scaleX(0.9941);">Output Window</div>
<div class="a" style="left:19px;top:813px;width:72.5px;height:4px;background:#c9cad5;"></div>
<div class="a" style="left:14px;top:817.3px;width:1184px;height:17.7px;background:#0a78d2;"></div>
<svg class="a" style="left:15.5px;top:820px" width="12" height="12" viewBox="0 0 12 12"><circle cx="6.2" cy="6.3" r="5" fill="#3aa0ef"/><rect x="5.6" y="5" width="1.3" height="4" fill="#fff"/><rect x="5.6" y="3" width="1.3" height="1.2" fill="#fff"/></svg>
<div class="t" style="left:30.50px;top:821.60px;font-family:'Liberation Sans', sans-serif;font-size:9.8px;color:#fff;transform:scaleX(0.9394);">Build cellular network graph... Polypeptide degradation of NP_417557.1 in cell ECOLI</div>
<svg class="a" style="left:1080px;top:816px" width="20" height="20" viewBox="0 0 20 20"><path d="M4.5 9.5 Q10 3.6 15.5 9.5" fill="none" stroke="#1e5fae" stroke-width="1.6" stroke-linecap="round"/><path d="M6.8 11 Q10 8.2 13.2 11 L10.2 15.6z" fill="#3cc6f3"/><circle cx="13.6" cy="14" r="2.4" fill="#1aa040"/><path d="M12.4 14.5l0.9 0.7 1.7-1.6" fill="none" stroke="#fff" stroke-width="0.9"/></svg>
<div class="t" style="left:1098.50px;top:821.60px;font-family:'Liberation Sans', sans-serif;font-size:9.8px;color:#fff;transform:scaleX(0.9359);">Connected To Server</div>
<svg class="a" style="left:1186px;top:822px" width="10" height="10" viewBox="0 0 10 10"><g fill="#9cc8ee"><rect x="7" y="7" width="1.3" height="1.3"/><rect x="4.5" y="7" width="1.3" height="1.3"/><rect x="7" y="4.5" width="1.3" height="1.3"/><rect x="2" y="7" width="1.3" height="1.3"/><rect x="4.5" y="4.5" width="1.3" height="1.3"/><rect x="7" y="2" width="1.3" height="1.3"/></g></svg>
</body></html>
